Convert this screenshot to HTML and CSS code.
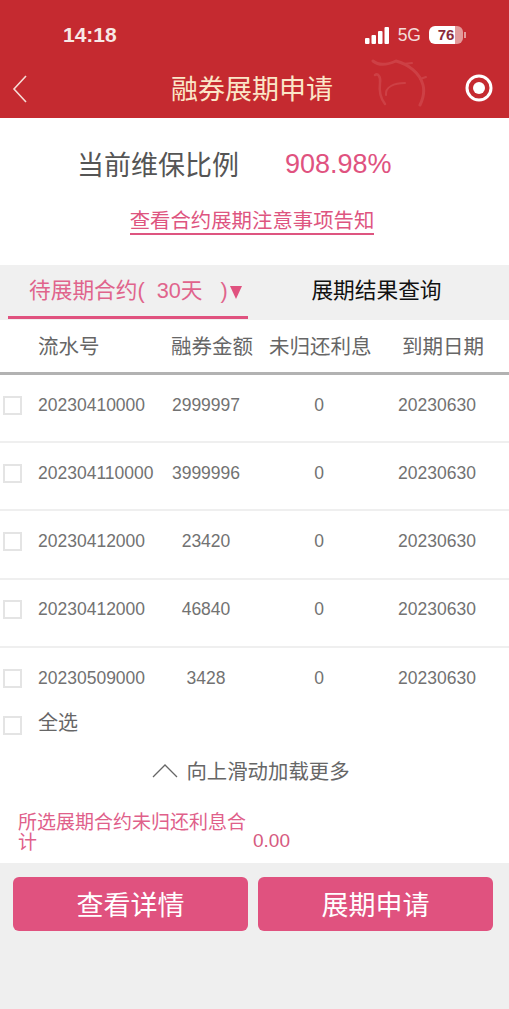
FILE: index.html
```html
<!DOCTYPE html>
<html lang="zh">
<head>
    <meta charset="UTF-8">
    <meta name="viewport" content="width=device-width, initial-scale=1.0">
    <title>融券展期申请</title>
    <link rel="stylesheet" href="styles.css">
</head>
<body>
    <header class="top">
        <div class="statusbar">
            <span class="time">14:18</span>
            <div class="status-right">
                <svg class="signal" width="25" height="17" viewBox="0 0 25 17"><rect x="0" y="11" width="4.5" height="6" rx="1"/><rect x="6.5" y="8" width="4.5" height="9" rx="1"/><rect x="13" y="4" width="4.5" height="13" rx="1"/><rect x="19.5" y="0" width="4.5" height="17" rx="1"/></svg>
                <span class="net">5G</span>
                <span class="battery"><span class="battery-num">76</span></span>
                <span class="battery-tip"></span>
            </div>
        </div>
        <div class="navbar">
            <svg class="back" width="16" height="28" viewBox="0 0 16 28"><path d="M14 1 L2 14 L14 27" fill="none" stroke="#f6dcd6" stroke-width="1.6"/></svg>
            <h1 class="nav-title">融券展期申请</h1>
            <svg class="dragon" width="58" height="52" viewBox="0 0 58 52"><g fill="none" stroke="#dd6a6c" stroke-linecap="round"><path stroke-width="3" d="M3 6 C9 11 17 10 26 6 C38 9 50 18 53 30 C55 38 53 44 50 50"/><path stroke-width="2" d="M33 9 L42 8"/><path stroke-width="2" d="M50 24 L56 22"/><path stroke-width="2.5" d="M5 20 C8 18 11 22 10 28 C9 36 11 44 15 49"/><path stroke-width="2" d="M16 40 C15 32 24 28 35 28"/></g></svg>
            <svg class="target" width="28" height="28" viewBox="0 0 28 28"><circle cx="14" cy="14" r="12" fill="none" stroke="#fff" stroke-width="3"/><circle cx="14" cy="14" r="6" fill="#fff"/></svg>
        </div>
    </header>

    <section class="ratio">
        <div class="ratio-row">
            <span class="ratio-label">当前维保比例</span>
            <span class="ratio-value">908.98%</span>
        </div>
        <a class="notice">查看合约展期注意事项告知</a>
    </section>

    <nav class="tabs">
        <div class="tab active">待展期合约(&nbsp;&nbsp;30天&nbsp;&nbsp;&nbsp;)<i class="caret"></i></div>
        <div class="tab">展期结果查询</div>
    </nav>

    <div class="row head">
        <span></span>
        <span>流水号</span>
        <span>融券金额</span>
        <span>未归还利息</span>
        <span>到期日期</span>
    </div>
    <div class="row item">
        <i class="check"></i><span class="no">20230410000</span><span>2999997</span><span>0</span><span>20230630</span>
    </div>
    <div class="row item">
        <i class="check"></i><span class="no">202304110000</span><span>3999996</span><span>0</span><span>20230630</span>
    </div>
    <div class="row item">
        <i class="check"></i><span class="no">20230412000</span><span>23420</span><span>0</span><span>20230630</span>
    </div>
    <div class="row item">
        <i class="check"></i><span class="no">20230412000</span><span>46840</span><span>0</span><span>20230630</span>
    </div>
    <div class="row item last">
        <i class="check"></i><span class="no">20230509000</span><span>3428</span><span>0</span><span>20230630</span>
    </div>

    <div class="select-all">
        <i class="check"></i><span class="select-label">全选</span>
    </div>

    <div class="more">
        <svg width="26" height="16" viewBox="0 0 26 16"><path d="M1 15 L13 3 L25 15" fill="none" stroke="#666" stroke-width="1.3"/></svg>
        <span>向上滑动加载更多</span>
    </div>

    <div class="summary">
        <p class="summary-label">所选展期合约未归还利息合计</p>
        <span class="summary-value">0.00</span>
    </div>

    <footer class="actions">
        <button class="btn">查看详情</button>
        <button class="btn">展期申请</button>
    </footer>
</body>
</html>
```

FILE: styles.css
```css
* {
    box-sizing: border-box;
}
html, body {
    height: 100%;
}
body {
    margin: 0;
    background: #fff;
    color: #666;
    font-family: "Liberation Sans", "Noto Sans CJK SC", sans-serif;
    display: flex;
    flex-direction: column;
}
.top {
    height: 118px;
    background: #c52a30;
    color: #fff;
}
.statusbar {
    height: 63px;
    padding: 7px 42px 0 63px;
    display: flex;
    align-items: center;
    justify-content: space-between;
}
.time {
    font-size: 21px;
    font-weight: bold;
    color: #f7e9e6;
}
.status-right {
    display: flex;
    align-items: center;
    gap: 8px;
    margin-right: 1px;
}
.signal {
    fill: #fff;
}
.net {
    font-size: 17.5px;
    color: #f3dcd9;
}
.battery {
    width: 34px;
    height: 18px;
    border-radius: 6px;
    background: linear-gradient(to right, #fff 76%, #e39a9a 76%);
    text-align: center;
}
.battery-num {
    display: block;
    color: #8b2b3a;
    font-size: 15px;
    font-weight: bold;
    line-height: 18px;
}
.battery-tip {
    width: 2px;
    height: 6px;
    margin-left: -7px;
    background: #e39a9a;
}
.navbar {
    position: relative;
    height: 54px;
    padding-bottom: 5px;
    display: flex;
    align-items: center;
    justify-content: center;
}
.nav-title {
    margin: 0 5px 0 0;
    font-size: 27px;
    font-weight: normal;
    color: #fbe6c8;
}
.back {
    position: absolute;
    left: 12px;
    top: 12px;
}
.dragon {
    position: absolute;
    left: 370px;
    top: -8px;
    opacity: 0.35;
}
.target {
    position: absolute;
    left: 465px;
    top: 11px;
}
.ratio {
    height: 147px;
    display: flex;
    flex-direction: column;
    align-items: center;
}
.ratio-row {
    margin-top: 28px;
    display: flex;
    align-items: center;
    gap: 46px;
    height: 34px;
    align-self: flex-start;
    padding-left: 77px;
}
.ratio-label {
    font-size: 27px;
    color: #555;
}
.ratio-value {
    margin-top: 3px;
    font-size: 27px;
    color: #e0527f;
}
.notice {
    margin: 29px 5px 0 0;
    font-size: 20.4px;
    line-height: 24px;
    color: #de5580;
    border-bottom: 2px solid #de5580;
}
.tabs {
    height: 55px;
    background: #f0f0f0;
    display: flex;
    padding-left: 8px;
}
.tab {
    width: 240px;
    height: 54px;
    font-size: 21.7px;
    line-height: 52px;
    color: #111;
    text-align: center;
    padding-left: 17px;
}
.tab.active {
    color: #e0648c;
    border-bottom: 3px solid #e0527f;
    text-align: left;
    padding-left: 21px;
    white-space: nowrap;
}
.caret {
    display: inline-block;
    margin-left: 2px;
    border-left: 6px solid transparent;
    border-right: 6px solid transparent;
    border-top: 13px solid #e0527f;
    vertical-align: -1px;
}
.row {
    display: grid;
    grid-template-columns: 38px 112px 112px 114px 122px;
    align-items: center;
    text-align: center;
}
.row .no {
    text-align: left;
    white-space: nowrap;
}
.head {
    grid-template-columns: 38px 133px 98px 133px 100px;
    height: 55px;
    padding-bottom: 2px;
    font-size: 20.5px;
    border-bottom: 3px solid #b2b2b2;
    text-align: left;
    white-space: nowrap;
}
.item {
    height: 68.2px;
    font-size: 17.5px;
    color: #727272;
    border-bottom: 2px solid #efefef;
    padding-bottom: 6px;
}
.item.last {
    height: 54px;
    border-bottom: none;
    padding: 7px 0 0;
}
.check {
    display: block;
    width: 19px;
    height: 19px;
    margin-left: 3px;
    border: 2px solid #e4e4e4;
}
.select-all {
    height: 36px;
    display: flex;
    align-items: center;
    font-size: 20px;
}
.select-all .check {
    margin-right: 16px;
    margin-top: 11px;
}
.select-label {
    margin-top: 3px;
}
.more {
    height: 50px;
    margin-top: 7px;
    display: flex;
    align-items: center;
    justify-content: center;
    gap: 8px;
    font-size: 20.4px;
    padding-right: 7px;
}
.summary {
    height: 68px;
    padding: 18px 0 0 18px;
    display: flex;
    color: #e0608a;
}
.summary-label {
    width: 230px;
    margin: 0;
    font-size: 19px;
    line-height: 20px;
}
.summary-value {
    margin: 17px 0 0 5px;
    font-size: 19px;
    line-height: 22px;
    color: #d65a80;
}
.actions {
    flex: 1;
    background: #efefef;
    display: flex;
    gap: 10px;
    padding: 14px 0 0 13px;
    align-items: flex-start;
}
.btn {
    width: 235px;
    height: 54px;
    border: none;
    border-radius: 6px;
    background: #e0527f;
    color: #fff;
    font-family: inherit;
    font-size: 27px;
}
```
